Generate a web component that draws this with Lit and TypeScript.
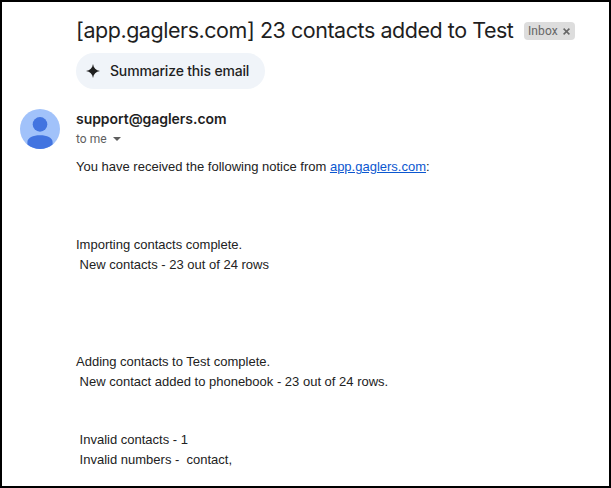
import { LitElement, html, css } from "lit";
import { customElement } from "lit/decorators.js";

@customElement("app-root")
export class AppRoot extends LitElement {
  static styles = css`
    :host {
      display: block;
      box-sizing: border-box;
      width: 611px;
      height: 488px;
      overflow: hidden;
      border: 2px solid #000;
      background: #fff;
      color: #1f1f1f;
      font-family: "Liberation Sans", Arial, sans-serif;
    }
    .subject {
      display: flex;
      align-items: center;
      height: 28px;
      padding: 15px 0 0 74px;
      white-space: nowrap;
    }
    h1 {
      margin: 0 0 2px;
      width: 448px;
      font: 400 21.5px/28px Inter, sans-serif;
      letter-spacing: -0.46px;
    }
    .label {
      display: flex;
      align-items: center;
      box-sizing: border-box;
      width: 51px;
      height: 18px;
      padding: 0 5px 0 4px;
      justify-content: space-between;
      border-radius: 4px;
      background: #ddd;
      color: #666;
      font: 400 12px/18px Roboto, sans-serif;
      letter-spacing: 0.1px;
    }
    .label svg {
      margin-top: 1px;
    }
    .summarize {
      display: flex;
      align-items: center;
      box-sizing: border-box;
      width: 189px;
      height: 36px;
      margin: 8px 0 0 74px;
      padding: 0 0 0 10px;
      border: 0;
      border-radius: 18px;
      background: #f0f4f9;
      color: #1f1f1f;
      font: 550 14px/20px Inter, sans-serif;
      letter-spacing: -0.17px;
      white-space: nowrap;
    }
    .summarize svg {
      margin-right: 10px;
    }
    .sender {
      display: flex;
      gap: 16px;
      padding: 20px 0 0 18px;
      height: 40px;
    }
    .name {
      font: 600 14px/20px Inter, sans-serif;
      letter-spacing: -0.05px;
    }
    .to {
      display: flex;
      align-items: center;
      gap: 6px;
      color: #5e5e5e;
      font: 400 12px/20px Roboto, sans-serif;
      letter-spacing: 0;
    }
    .body {
      margin: 8px 0 0 74px;
      font-size: 13px;
      line-height: 19.5px;
      color: #222;
      white-space: pre;
    }
    .body p {
      margin: 0;
    }
    .gap2 { padding-top: 39px; }
    .gap3 { padding-top: 58.5px; }
    .gap4 { padding-top: 78px; }
    a { color: #0b57d0; }
  `;

  render() {
    return html`
      <header class="subject">
        <h1>[app.gaglers.com] 23 contacts added to Test</h1>
        <span class="label">Inbox
          <svg width="7" height="7" viewBox="0 0 7 7" stroke="#666" stroke-width="1.5"><path d="M.6.6l5.8 5.8M6.4.6L.6 6.4" /></svg>
        </span>
      </header>
      <button class="summarize">
        <svg width="14" height="14" viewBox="0 0 14 14" fill="#1f1f1f">
          <path d="M7 0C7.6 4.1 9.9 6.4 14 7 9.9 7.6 7.6 9.9 7 14 6.4 9.9 4.1 7.6 0 7 4.1 6.4 6.4 4.1 7 0z" />
        </svg>
        Summarize this email
      </button>
      <section class="sender">
        <svg width="40" height="40" viewBox="0 0 40 40">
          <circle cx="20" cy="20" r="20" fill="#a1c2fa" />
          <circle cx="20" cy="15.4" r="7.3" fill="#4274e0" />
          <path d="M7.4 35.5v-2.4c0-4.3 5.6-6.8 12.6-6.8s12.6 2.5 12.6 6.8v2.4A20 20 0 0 1 7.4 35.5z" fill="#4274e0" />
        </svg>
        <div>
          <div class="name">support@gaglers.com</div>
          <div class="to">to me
            <svg width="8" height="4" viewBox="0 0 8 4" fill="#5e5e5e"><path d="M0 0h8L4 4z" /></svg>
          </div>
        </div>
      </section>
      <article class="body"><p>You have received the following notice from <a href="#">app.gaglers.com</a>:</p><p class="gap3">Importing contacts complete.</p><p> New contacts - 23 out of 24 rows</p><p class="gap4">Adding contacts to Test complete.</p><p> New contact added to phonebook - 23 out of 24 rows.</p><p class="gap2"> Invalid contacts - 1</p><p> Invalid numbers -  contact,</p></article>
    `;
  }
}
